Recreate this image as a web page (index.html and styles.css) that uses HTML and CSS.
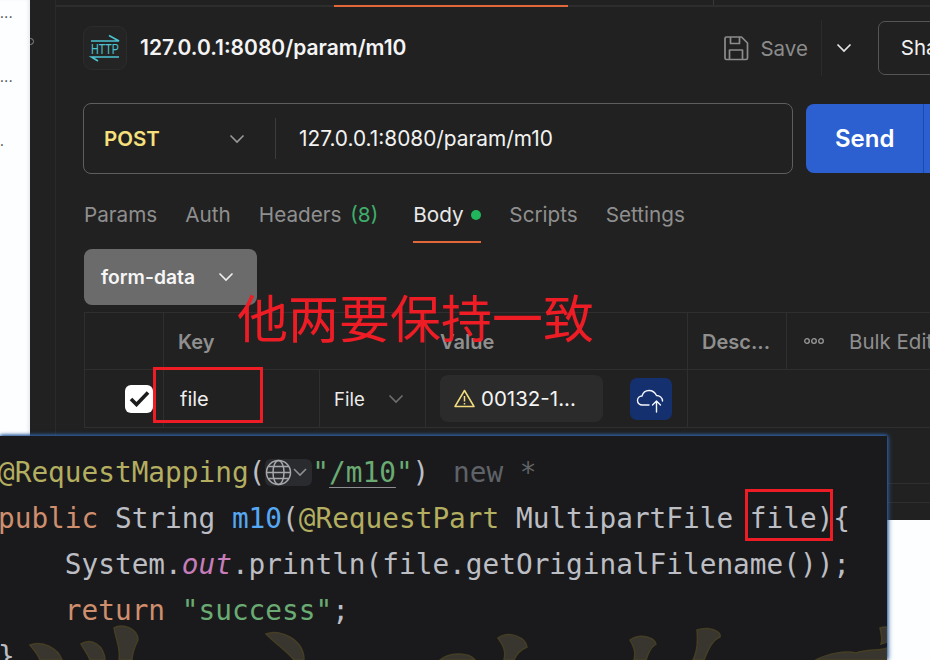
FILE: index.html
```html
<!DOCTYPE html>
<html lang="zh">
<head>
<meta charset="utf-8">
<title>Postman</title>
<link rel="stylesheet" href="styles.css">
</head>
<body>
<div class="page">
  <aside class="left-strip">
    <span class="dots">...</span>
    <span class="dots">...</span>
    <span class="dots dots-small">.</span>
  </aside>
  <main class="panel">
    <div class="rail"><span class="rail-dot"></span></div>
    <div class="content">
      <div class="tabstrip"><div class="tab-active"></div><div class="tab-sep"></div></div>
      <header class="req-head">
        <div class="http-icon">
          <svg width="44" height="44" viewBox="0 0 44 44" fill="none" stroke="#4cc4d2" stroke-width="1.600">
            <path d="M8 15H36L26 9.500"/>
            <path d="M36 31H8.500L15 35"/>
            <text x="22" y="28" class="http-text" text-anchor="middle" textLength="28" lengthAdjust="spacingAndGlyphs">HTTP</text>
          </svg>
        </div>
        <h1 class="req-title">127.0.0.1:8080/param/m10</h1>
        <div class="save">
          <svg width="26" height="26" viewBox="0 0 26 26" fill="none" stroke="#8c8c8c" stroke-width="1.700" stroke-linejoin="round">
            <path d="M2 3.500a1.500 1.500 0 0 1 1.500-1.500H18.500L24.500 8V23a1.500 1.500 0 0 1-1.500 1.500H3.500A1.500 1.500 0 0 1 2 23Z"/>
            <path d="M7.500 2V8.500H16.500V2"/>
            <path d="M6.500 24.500V15H19.500V24.500"/>
          </svg>
          <span class="save-label">Save</span>
          <span class="save-sep"></span>
          <svg class="save-chev" width="16" height="10" viewBox="0 0 16 10" fill="none" stroke="#e4e4e4" stroke-width="1.700"><path d="M1.500 1.500L8 8L14.500 1.500"/></svg>
        </div>
        <div class="share">Share</div>
      </header>

      <div class="url-row">
        <div class="url-box">
          <span class="method">POST</span>
          <svg class="method-chev" width="16" height="10" viewBox="0 0 16 10" fill="none" stroke="#9a9a9a" stroke-width="1.600"><path d="M1.500 1.500L8 8L14.500 1.500"/></svg>
          <span class="url-sep"></span>
          <span class="url-text">127.0.0.1:8080/param/m10</span>
        </div>
        <div class="send"><span class="send-label">Send</span><span class="send-sep"></span></div>
      </div>

      <nav class="tabs">
        <span class="tab">Params</span>
        <span class="tab">Auth</span>
        <span class="tab">Headers <span class="count">(8)</span></span>
        <span class="tab tab-on">Body <i class="dot"></i></span>
        <span class="tab">Scripts</span>
        <span class="tab">Settings</span>
      </nav>

      <div class="body-type">
        <span>form-data</span>
        <svg width="16" height="10" viewBox="0 0 16 10" fill="none" stroke="#f0f0f0" stroke-width="1.600"><path d="M1.500 1.500L8 8L14.500 1.500"/></svg>
      </div>

      <div class="table">
        <div class="row row-head">
          <div class="c c-check"></div>
          <div class="c c-key th">Key</div>
          <div class="c c-value th">Value</div>
          <div class="c c-desc th">Desc...</div>
          <div class="c c-bulk">
            <svg class="more" width="22" height="8" viewBox="0 0 22 8" fill="none" stroke="#9a9a9a" stroke-width="1.300"><circle cx="4" cy="4" r="2.300"/><circle cx="11" cy="4" r="2.300"/><circle cx="18" cy="4" r="2.300"/></svg>
            <span class="bulk">Bulk Edit</span>
          </div>
        </div>
        <div class="row row-data">
          <div class="c c-check">
            <span class="checkbox"><svg width="21" height="17" viewBox="0 0 21 17" fill="none" stroke="#1c1c1c" stroke-width="3.600"><path d="M2 9L7.500 14.500L19 2.500"/></svg></span>
          </div>
          <div class="c c-name">file</div>
          <div class="c c-type">
            <span>File</span>
            <svg width="16" height="10" viewBox="0 0 16 10" fill="none" stroke="#6e6e6e" stroke-width="1.600"><path d="M1.500 1.500L8 8L14.500 1.500"/></svg>
          </div>
          <div class="c c-value c-val-data">
            <span class="file-pill">
              <svg width="21" height="19" viewBox="0 0 21 19" fill="none" stroke="#f2dc7e" stroke-width="1.500" stroke-linejoin="round"><path d="M10.500 1.500L20 17.500H1Z"/><path d="M10.500 7V12.500M10.500 14V15.500"/></svg>
              <span>00132-1...</span>
            </span>
            <span class="cloud">
              <svg width="30" height="28" viewBox="0 0 30 28" fill="none" stroke="#f4f6fb" stroke-width="1.400" stroke-linecap="round" stroke-linejoin="round"><path d="M13 20H6.500C3.500 20 1.500 18 1.500 15.500C1.500 13 3.500 11 6 11C7 7.500 9.500 5.500 13 5.500C16.500 5.500 19 7.500 20.500 10.500C23.500 10.500 26.500 12.500 26.500 16"/><path d="M20.500 27V16M16.500 20L20.500 16L24.500 20"/></svg>
            </span>
          </div>
          <div class="c c-rest"></div>
        </div>
        <div class="row row-empty"></div>
        <div class="row row-thin"></div>
      </div>
    </div>
  </main>
</div>

<h2 class="note">他两要保持一致</h2>
<div class="mark mark-key"></div>

<section class="code">
  <svg class="blobs" width="887" height="40" viewBox="0 0 887 40" fill="#38362f" stroke="#453e24" stroke-width="1.500">
    <path d="M30 25C42 20 58 28 62 40H40C38 34 34 30 30 25Z"/>
    <path d="M81 24C92 17 104 26 105 40H90C88 34 84 30 81 24Z"/>
    <path d="M114 8C122 3 138 8 138 20C134 28 132 34 132 40H119C121 28 116 20 114 8Z"/>
    <path d="M266 14C280 8 304 20 304 40H294C288 32 276 24 266 14Z"/>
    <path d="M498 18C510 10 526 18 527 27C520 30 516 35 514 40H504C506 32 504 26 498 18Z"/>
    <path d="M630 20C640 13 654 17 656 24C650 28 648 34 646 40H634C636 32 634 27 630 20Z"/>
    <path d="M697 10C708 6 722 11 720 17C712 20 708 30 704 40H693C698 30 698 20 697 10Z"/>
    <path d="M816 40C826 34 846 30 856 33C866 29 880 31 887 28V40Z"/>
    <path d="M880 8C882 7 886 7 887 7V22L881 24C883 18 881 13 880 8Z"/>
    <path d="M440 40C448 33 468 31 475 40Z"/>
  </svg>
  <pre class="code-text"><span class="ann">@RequestMapping</span>(<span class="chip"><svg width="27" height="27" viewBox="0 0 27 27" fill="none" stroke="#a6a8ac" stroke-width="1.500"><circle cx="13.500" cy="13.500" r="12"/><ellipse cx="13.500" cy="13.500" rx="5.500" ry="12"/><path d="M1.500 13.500H25.500M3.500 7.500H23.500M3.500 19.500H23.500"/></svg><svg width="14" height="9" viewBox="0 0 14 9" fill="none" stroke="#8c8e92" stroke-width="1.600"><path d="M1 1L7 7L13 1"/></svg></span><span class="str">"<span class="link">/m10</span>"</span>) <span class="hint">new *</span>
<span class="kw">public</span> String <span class="fn">m10</span>(<span class="ann">@RequestPart</span> MultipartFile file){
    System.<span class="field">out</span>.println(file.getOriginalFilename());
    <span class="kw">return</span> <span class="str">"success"</span>;
}</pre>
  <div class="mark mark-code"></div>
</section>
</body>
</html>
```
FILE: styles.css
```css
* { box-sizing: border-box; }
html, body { margin: 0; padding: 0; }
body {
  width: 930px;
  height: 660px;
  overflow: hidden;
  position: relative;
  background: #fdfeff;
  font-family: Inter, "Noto Sans", sans-serif;
  color: #ececec;
}
.page { display: flex; height: 520px; }

.left-strip {
  width: 30px;
  flex: none;
  display: flex;
  flex-direction: column;
  padding-top: 7px;
  color: #444;
  box-shadow: inset -3px 0 4px -2px #dfe3ea;
}
.dots { font-size: 12px; line-height: 14px; height: 64px; letter-spacing: 0.5px; font-weight: 600; }

.panel {
  width: 900px;
  flex: none;
  display: flex;
  background: #212121;
}
.rail { width: 26px; flex: none; border-right: 1px solid #2a2a2a; padding-top: 38px; overflow: hidden; }
.rail-dot {
  display: block;
  width: 7px;
  height: 7px;
  margin-left: -3px;
  border: 1.500px solid #8a8a8a;
  border-radius: 50%;
}
.content { flex: 1; min-width: 0; padding-left: 27px; display: flex; flex-direction: column; }

.tabstrip {
  height: 7px;
  margin-left: -27px;
  display: flex;
  align-items: flex-end;
  border-bottom: 2px solid #2d2d2d;
  position: relative;
}
.tab-active {
  position: absolute;
  left: 278px;
  bottom: -2px;
  width: 234px;
  height: 2px;
  background: #e2673a;
}
.tab-sep { position: absolute; left: 657px; top: 0; width: 1px; height: 5px; background: #3a3a3a; }

.req-head { display: flex; align-items: center; height: 54px; margin-top: 14px; }
.http-icon {
  width: 44px;
  height: 44px;
  flex: none;
  border: 1px solid #2c2c2c;
  border-radius: 9px;
  background: #242424;
}
.http-icon svg { display: block; margin: -1px; }
.http-text {
  font-family: "Liberation Sans", sans-serif;
  font-size: 15.500px;
  fill: #4cc4d2;
  stroke: none;
}
.req-title {
  margin: 0 0 0 13px;
  font-size: 21px;
  line-height: 26px;
  font-weight: 600;
  color: #f4f4f4;
  white-space: nowrap;
}
.save { display: flex; align-items: center; margin-left: 317px; }
.save-label { margin-left: 11px; font-size: 20.500px; color: #8c8c8c; }
.save-sep { width: 1px; height: 56px; margin-left: 13px; background: #2b2b2b; }
.save-chev { margin-left: 14px; }
.share {
  margin-left: 26px;
  width: 120px;
  height: 54px;
  flex: none;
  padding-left: 22px;
  line-height: 52px;
  font-size: 20.500px;
  color: #f0f0f0;
  border: 1px solid #555;
  border-radius: 7px;
}

.url-row { display: flex; height: 71px; margin-top: 28px; }
.url-box {
  width: 710px;
  flex: none;
  display: flex;
  align-items: center;
  padding-left: 20px;
  border: 1px solid #5e5e5e;
  border-radius: 8px;
}
.method { width: 125px; font-size: 20.500px; font-weight: 600; color: #f6e07c; }
.method-chev { flex: none; }
.url-sep { width: 1px; height: 41px; margin-left: 30px; background: #3c3c3c; }
.url-text { margin-left: 23px; font-size: 20.850px; color: #f2f2f2; white-space: nowrap; }
.send {
  width: 150px;
  height: 69px;
  flex: none;
  margin: 1px 0 0 13px;
  display: flex;
  align-items: center;
  background: #2c5fcf;
  border-radius: 8px 0 0 8px;
}
.send-label { width: 117px; padding-left: 29px; font-size: 24px; font-weight: 600; color: #fff; }
.send-sep { width: 1px; height: 69px; background: #1d4ba8; }

.tabs { display: flex; height: 68px; margin-left: 1px; gap: 28px; }
.tab {
  display: block;
  height: 69px;
  padding-top: 28px;
  font-size: 20.700px;
  line-height: 26px;
  color: #8f8f8f;
  white-space: nowrap;
}
.count { color: #3fae6b; margin-left: 3px; }
.tab-on { color: #e8e8e8; box-shadow: inset 0 -2px 0 #e2673a; margin-left: 7px; }
.dot { display: inline-block; width: 10px; height: 10px; margin-left: 2px; border-radius: 50%; background: #22b65c; vertical-align: 2px; }

.body-type {
  width: 173px;
  height: 56px;
  margin: 7px 0 0 1px;
  flex: none;
  display: flex;
  align-items: center;
  justify-content: space-between;
  padding: 0 23px 0 17px;
  background: #6b6b6b;
  border-radius: 8px;
  font-size: 19.300px;
  font-weight: 600;
  color: #f6f6f6;
}

.table { margin: 7px 0 0 1px; border-top: 1px solid #2f2f2f; width: 846px; }
.row { display: flex; border-bottom: 1px solid #2f2f2f; }
.row-head { height: 57px; }
.row-data { height: 58px; }
.row-empty { height: 56px; }
.row-thin { height: 19px; }
.c { display: flex; align-items: center; border-right: 1px solid #2f2f2f; }
.c-check { width: 80px; border-left: 1px solid #2f2f2f; justify-content: flex-end; padding-right: 10px; flex: none; }
.c-key { width: 262px; flex: none; padding-left: 14px; }
.c-value { width: 262px; flex: none; padding-left: 14px; }
.c-desc { width: 99px; flex: none; padding-left: 14px; }
.c-bulk { flex: 1; min-width: 0; border-right: 0; padding-left: 16px; white-space: nowrap; overflow: hidden; }
.more { flex: none; }
.bulk { margin-left: 24px; font-size: 20.500px; color: #8f8f8f; }
.th { font-size: 20px; font-weight: 600; color: #8f8f8f; padding-top: 1px; }
.checkbox {
  width: 28px;
  height: 28px;
  display: flex;
  align-items: center;
  justify-content: center;
  background: #fff;
  border-radius: 6px;
}
.c-name { width: 156px; flex: none; padding-left: 16px; font-size: 20px; color: #f0f0f0; }
.c-type {
  width: 106px;
  flex: none;
  padding-left: 14px;
  font-size: 18.500px;
  color: #ededed;
  gap: 23px;
}
.c-val-data { gap: 27px; }
.file-pill {
  width: 163px;
  height: 47px;
  display: flex;
  align-items: center;
  gap: 6px;
  padding-left: 14px;
  background: #2b2b2b;
  border-radius: 8px;
  font-size: 20.500px;
  color: #f4f4f4;
}
.cloud {
  width: 42px;
  height: 42px;
  display: flex;
  align-items: center;
  justify-content: center;
  background: #14306f;
  border-radius: 7px;
}
.c-rest { flex: 1; border-right: 0; }

.note {
  position: absolute;
  left: 237px;
  top: 281px;
  margin: 0;
  font-family: "Noto Sans CJK SC", sans-serif;
  font-size: 51px;
  line-height: 70px;
  font-weight: 400;
  color: #ee1c25;
  white-space: nowrap;
  z-index: 3;
}
.mark { position: absolute; border: 3px solid #ee1c25; z-index: 3; }
.mark-key { left: 153px; top: 367px; width: 110px; height: 56px; }
.mark-code { left: 745px; top: 53px; width: 88px; height: 52px; }

.code {
  position: absolute;
  left: 0;
  top: 436px;
  width: 887px;
  height: 224px;
  background: #1a1a1c;
  box-shadow: 0 -1px 3px #2f5f9f, 1px 0 5px #2f5f9f;
  z-index: 2;
}
.blobs { position: absolute; left: 0; top: 184px; }
.code-text {
  position: relative;
  margin: 0 0 0 -2px;
  padding-top: 14px;
  font-family: "DejaVu Sans Mono", monospace;
  font-size: 27.750px;
  line-height: 46px;
  color: #bcbec4;
}
.ann { color: #b3ae60; }
.kw { color: #cf8e6d; }
.fn { color: #56a8f5; }
.str { color: #6aab73; }
.field { color: #c77dbb; font-style: italic; }
.link { text-decoration: underline; text-decoration-color: #8c8e92; text-decoration-thickness: 1px; text-underline-offset: 5px; }
.hint { color: #5f6368; margin-left: 7px; }
.chip {
  display: inline-flex;
  align-items: center;
  gap: 1px;
  width: 47px;
  height: 27px;
  vertical-align: -4px;
  background: #2a2b2e;
  border-radius: 6px;
}
```
